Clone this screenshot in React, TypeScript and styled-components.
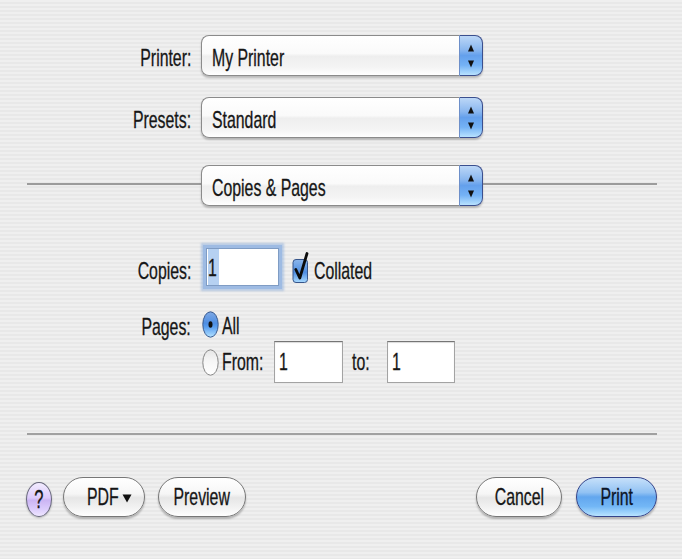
import React from 'react';
import styled, { createGlobalStyle, css } from 'styled-components';

const GlobalStyle = createGlobalStyle`
  html, body { margin: 0; padding: 0; }
  body {
    width: 682px;
    height: 559px;
    overflow: hidden;
    font-family: "Liberation Sans", Arial, sans-serif;
  }
`;

const Sheet = styled.div`
  width: 682px;
  height: 559px;
  box-sizing: border-box;
  padding-top: 35px;
  display: flex;
  flex-direction: column;
  color: #161616;
  font-size: 24px;
  background: repeating-linear-gradient(
    to bottom,
    #efefef 0px,
    #efefef 2px,
    #e8e8e8 2px,
    #e8e8e8 4px
  );
`;

const Txt = styled.span<{ $origin?: 'left' | 'right' | 'center'; $dy?: number }>`
  display: inline-block;
  white-space: nowrap;
  line-height: 1;
  -webkit-text-stroke: 0.3px currentColor;
  transform: translateY(${({ $dy = 0 }) => $dy}px) scaleX(0.66);
  transform-origin: ${({ $origin = 'left' }) => $origin} center;
`;

/* ---------- pop-up menus ---------- */

const FieldRow = styled.div<{ $below: number }>`
  display: grid;
  grid-template-columns: 191px 282px;
  column-gap: 10px;
  align-items: center;
  height: 41px;
  margin-bottom: ${({ $below }) => $below}px;
`;

const FieldLabel = styled.div`
  text-align: right;
`;

const PopUpBox = styled.div`
  display: flex;
  width: 282px;
  height: 41px;
  box-sizing: border-box;
  border-radius: 8px;
  box-shadow: 0 2px 2px rgba(0, 0, 0, 0.22);
`;

const PopUpValue = styled.div`
  flex: 1;
  display: flex;
  align-items: center;
  padding-left: 10px;
  border: 1px solid #8b8b8b;
  border-right: none;
  border-radius: 8px 0 0 8px;
  background: linear-gradient(
    #ffffff 0%,
    #fafafa 45%,
    #eeeeee 52%,
    #f4f4f4 80%,
    #ffffff 100%
  );
`;

const Stepper = styled.div`
  width: 24px;
  box-sizing: border-box;
  display: flex;
  align-items: center;
  justify-content: center;
  border: 1px solid #3b4f8e;
  border-left: 1px solid #6d8fc9;
  border-radius: 0 8px 8px 0;
  background: linear-gradient(
    #bcd7f7 0%,
    #8ab7ef 35%,
    #64a0ec 50%,
    #74b2f5 75%,
    #b8e2ff 100%
  );
`;

const StepperArrows = () => (
  <svg width="8" height="26" viewBox="0 0 8 26">
    <polygon points="4,1.5 7,8.5 1,8.5" fill="#111" />
    <polygon points="1,17.5 7,17.5 4,24.5" fill="#111" />
  </svg>
);

const PopUp = ({ value }: { value: string }) => (
  <PopUpBox>
    <PopUpValue>
      <Txt $dy={1.5}>{value}</Txt>
    </PopUpValue>
    <Stepper>
      <StepperArrows />
    </Stepper>
  </PopUpBox>
);

const PanelRow = styled.div`
  display: flex;
  align-items: center;
  height: 41px;
  padding: 0 25px 0 27px;
`;

const Rule = styled.div`
  flex: 1;
  height: 2px;
  margin-top: -3px;
  background: #9c9c9c;
`;

/* ---------- options ---------- */

const Options = styled.div`
  display: grid;
  grid-template-columns: 191px 1fr;
  column-gap: 10px;
  row-gap: 25px;
  margin-top: 42px;
`;

const OptionLabel = styled.div<{ $h: number }>`
  height: ${({ $h }) => $h}px;
  display: flex;
  align-items: center;
  justify-content: flex-end;
`;

const CopiesControls = styled.div`
  display: flex;
  align-items: center;
  height: 38px;
`;

const TextField = styled.div<{ $w: number; $h: number; $focused?: boolean }>`
  width: ${({ $w }) => $w}px;
  height: ${({ $h }) => $h}px;
  box-sizing: border-box;
  display: flex;
  align-items: center;
  padding-left: 4px;
  background: #ffffff;
  border: 1px solid #a3a3a3;
  border-top-color: #757575;
  box-shadow: inset 0 1px 1px rgba(0, 0, 0, 0.15);
  ${({ $focused }) =>
    $focused &&
    css`
      margin-left: 5px;
      padding-left: 0;
      border-color: #7f9cc4;
      box-shadow: 0 0 0 3px #9ebbe3, 0 0 2px 5px rgba(120, 160, 215, 0.45);
    `}
`;

const Selection = styled.span`
  display: flex;
  align-items: center;
  align-self: stretch;
  width: 11px;
  margin-left: 1px;
  background: #b6d1f2;
`;

const CheckSlot = styled.div`
  display: flex;
  margin-left: 13px;
  margin-right: 4px;
  margin-top: 2px;
`;

const CheckBox = () => (
  <svg width="18" height="32" viewBox="0 0 18 32">
    <defs>
      <linearGradient id="cbFill" x1="0" y1="0" x2="0" y2="1">
        <stop offset="0" stopColor="#8db6ea" />
        <stop offset="0.45" stopColor="#5b97e4" />
        <stop offset="0.55" stopColor="#4d8ce2" />
        <stop offset="1" stopColor="#a9dbff" />
      </linearGradient>
    </defs>
    <rect x="1" y="7.5" width="14.5" height="23" rx="3" fill="url(#cbFill)" stroke="#37558a" />
    <path
      d="M3.8 17.5 L7.8 26 L15 1.5"
      fill="none"
      stroke="#0b0b0b"
      strokeWidth="2.8"
      strokeLinecap="round"
      strokeLinejoin="round"
    />
  </svg>
);

const RadioGroup = styled.div`
  display: flex;
  flex-direction: column;
  gap: 3px;
`;

const RadioRow = styled.div<{ $h: number }>`
  display: flex;
  align-items: center;
  height: ${({ $h }) => $h}px;
  padding-left: 1px;
`;

const RadioSlot = styled.div`
  display: flex;
  margin-right: 3px;
`;

const Radio = ({ checked }: { checked?: boolean }) => (
  <svg width="17" height="27" viewBox="0 0 17 27">
    <defs>
      <linearGradient id="radioOn" x1="0" y1="0" x2="0" y2="1">
        <stop offset="0" stopColor="#7fa9e4" />
        <stop offset="0.45" stopColor="#4e8ee3" />
        <stop offset="0.6" stopColor="#5a9ff0" />
        <stop offset="1" stopColor="#b4e2ff" />
      </linearGradient>
      <linearGradient id="radioOff" x1="0" y1="0" x2="0" y2="1">
        <stop offset="0" stopColor="#e6e6e6" />
        <stop offset="0.45" stopColor="#f6f6f6" />
        <stop offset="1" stopColor="#ffffff" />
      </linearGradient>
    </defs>
    <ellipse
      cx="8.5"
      cy="13.5"
      rx="7.7"
      ry="12.7"
      fill={checked ? 'url(#radioOn)' : 'url(#radioOff)'}
      stroke={checked ? '#3a5a8e' : '#858585'}
    />
    {checked && <ellipse cx="8.5" cy="13.5" rx="2" ry="3.3" fill="#111" />}
  </svg>
);

const RangeLabel = styled.div<{ $w: number; $pad?: number }>`
  width: ${({ $w }) => $w}px;
  padding-left: ${({ $pad = 0 }) => $pad}px;
  box-sizing: border-box;
`;

/* ---------- bottom bar ---------- */

const Separator = styled.div`
  height: 2px;
  margin: 50px 25px 0 27px;
  background: #a0a0a0;
`;

const ButtonBar = styled.div`
  display: flex;
  align-items: center;
  height: 40px;
  margin-top: 42px;
  padding: 0 25px 0 26px;
`;

const Spacer = styled.div`
  flex: 1;
`;

const HelpButton = styled.button`
  all: unset;
  box-sizing: border-box;
  width: 26px;
  height: 35px;
  margin-top: 5px;
  border-radius: 50%;
  display: flex;
  align-items: center;
  justify-content: center;
  color: #161616;
  font-size: 25px;
  font-family: "Liberation Sans", Arial, sans-serif;
  border: 1px solid #67677c;
  background: linear-gradient(
    #f3ecff 0%,
    #dccbfb 45%,
    #cbb4f3 52%,
    #dccdfc 80%,
    #efe6ff 100%
  );
  box-shadow: 0 1px 2px rgba(0, 0, 0, 0.25);
`;

const PillButton = styled.button<{ $w: number; $gap?: number; $default?: boolean; $padLeft?: number }>`
  all: unset;
  box-sizing: border-box;
  width: ${({ $w }) => $w}px;
  height: 40px;
  margin-left: ${({ $gap = 0 }) => $gap}px;
  border-radius: 20px;
  display: flex;
  align-items: center;
  justify-content: ${({ $padLeft }) => ($padLeft ? 'flex-start' : 'center')};
  padding-left: ${({ $padLeft = 0 }) => $padLeft}px;
  color: ${({ $default }) => ($default ? '#0c1628' : '#161616')};
  font-size: 24px;
  font-family: "Liberation Sans", Arial, sans-serif;
  border: 1px solid ${({ $default }) => ($default ? '#34448a' : '#777777')};
  background: ${({ $default }) =>
    $default
      ? 'linear-gradient(#c6e0fa 0%, #92c2f3 38%, #62a6ee 50%, #73b7f6 75%, #b8e4ff 100%)'
      : 'linear-gradient(#ffffff 0%, #f6f6f6 42%, #e6e6e6 52%, #f2f2f2 78%, #ffffff 100%)'};
  box-shadow: 0 2px 2px rgba(0, 0, 0, 0.25);
`;

const Caret = styled.svg`
  margin-left: -13px;
  margin-top: 2px;
`;

export default function App() {
  return (
    <>
      <GlobalStyle />
      <Sheet>
        <FieldRow $below={21}>
          <FieldLabel>
            <Txt $origin="right" $dy={2}>Printer:</Txt>
          </FieldLabel>
          <PopUp value="My Printer" />
        </FieldRow>
        <FieldRow $below={27}>
          <FieldLabel>
            <Txt $origin="right" $dy={2}>Presets:</Txt>
          </FieldLabel>
          <PopUp value="Standard" />
        </FieldRow>
        <PanelRow>
          <Rule />
          <PopUp value="Copies & Pages" />
          <Rule />
        </PanelRow>

        <Options>
          <OptionLabel $h={38}>
            <Txt $origin="right" $dy={4}>Copies:</Txt>
          </OptionLabel>
          <CopiesControls>
            <TextField $w={73} $h={38} $focused>
              <Selection>
                <Txt $dy={1}>1</Txt>
              </Selection>
            </TextField>
            <CheckSlot>
              <CheckBox />
            </CheckSlot>
            <Txt $dy={4}>Collated</Txt>
          </CopiesControls>

          <OptionLabel $h={27}>
            <Txt $origin="right" $dy={1.5}>Pages:</Txt>
          </OptionLabel>
          <RadioGroup>
            <RadioRow $h={27}>
              <RadioSlot>
                <Radio checked />
              </RadioSlot>
              <Txt $dy={1}>All</Txt>
            </RadioRow>
            <RadioRow $h={42}>
              <RadioSlot>
                <Radio />
              </RadioSlot>
              <RangeLabel $w={52}>
                <Txt>From:</Txt>
              </RangeLabel>
              <TextField $w={69} $h={42}>
                <Txt>1</Txt>
              </TextField>
              <RangeLabel $w={44} $pad={9}>
                <Txt>to:</Txt>
              </RangeLabel>
              <TextField $w={68} $h={42}>
                <Txt>1</Txt>
              </TextField>
            </RadioRow>
          </RadioGroup>
        </Options>

        <Separator />

        <ButtonBar>
          <HelpButton aria-label="Help">
            <Txt $origin="center">?</Txt>
          </HelpButton>
          <PillButton $w={82} $gap={11} $padLeft={23}>
            <Txt>PDF</Txt>
            <Caret width="10" height="10" viewBox="0 0 10 10">
              <polygon points="0.5,1.5 9.5,1.5 5,9.5" fill="#111" />
            </Caret>
          </PillButton>
          <PillButton $w={88} $gap={13}>
            <Txt $origin="center">Preview</Txt>
          </PillButton>
          <Spacer />
          <PillButton $w={86}>
            <Txt $origin="center">Cancel</Txt>
          </PillButton>
          <PillButton $w={81} $gap={14} $default>
            <Txt $origin="center">Print</Txt>
          </PillButton>
        </ButtonBar>
      </Sheet>
    </>
  );
}
